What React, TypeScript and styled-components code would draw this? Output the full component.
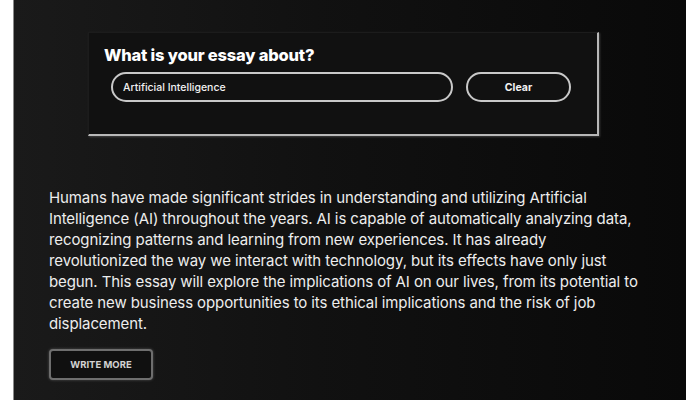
import { useState, type FC } from "react";
import styled, { createGlobalStyle } from "styled-components";

const GlobalStyle = createGlobalStyle`
  html, body {
    margin: 0;
    padding: 0;
    background: #ffffff;
  }
  * {
    box-sizing: border-box;
  }
`;

const ESSAY =
  "Humans have made significant strides in understanding and utilizing Artificial Intelligence (AI) throughout the years. AI is capable of automatically analyzing data, recognizing patterns and learning from new experiences. It has already revolutionized the way we interact with technology, but its effects have only just begun. This essay will explore the implications of AI on our lives, from its potential to create new business opportunities to its ethical implications and the risk of job displacement.";

const App: FC = () => {
  const [topic, setTopic] = useState("Artificial Intelligence");

  return (
    <>
      <GlobalStyle />
      <Page>
        <Panel>
          <TopicCard>
            <Heading>What is your essay about?</Heading>
            <TopicRow>
              <TopicInput value={topic} onChange={(e) => setTopic(e.target.value)} />
              <ClearButton onClick={() => setTopic("")}>Clear</ClearButton>
            </TopicRow>
          </TopicCard>

          {/* Generated essay */}
          <EssaySection>
            <EssayText>{ESSAY}</EssayText>
            <WriteMoreButton>Write more</WriteMoreButton>
          </EssaySection>
        </Panel>
      </Page>
    </>
  );
};

const Page = styled.div`
  width: 700px;
  height: 400px;
  padding: 0 14px 0 13px;
  background: #ffffff;
  overflow: hidden;
`;

const Panel = styled.main`
  height: 100%;
  border-left: 1px solid #8a8a8a;
  background: linear-gradient(to right, #1a1a1a 0%, #111111 45%, #090909 100%);
  padding-top: 32px;
  font-family: Inter, "Noto Sans", sans-serif;
  color: #ececec;
`;

const TopicCard = styled.section`
  width: 511px;
  height: 104px;
  margin-left: 74px;
  padding: 11px 0 0 15px;
  background: #111111;
  border-top: 1px solid #1c1c1c;
  border-left: 1px solid #1c1c1c;
  border-right: 2px solid #b8b8b8;
  border-bottom: 2px solid #b8b8b8;
  box-shadow: 1px 1px 2px rgba(255, 255, 255, 0.2);
`;

const Heading = styled.h2`
  margin: 0;
  font-size: 16.5px;
  line-height: 22px;
  font-weight: 800;
  letter-spacing: -0.2px;
  color: #ffffff;
`;

const TopicRow = styled.div`
  display: flex;
  align-items: center;
  gap: 13px;
  margin: 6px 0 0 7px;
`;

const pill = `
  height: 30px;
  border: 2px solid #c9c9c9;
  border-radius: 15px;
  background: transparent;
  color: #f2f2f2;
  font-family: Inter, "Noto Sans", sans-serif;
  outline: none;
`;

const TopicInput = styled.input`
  ${pill}
  width: 342px;
  padding: 0 10px;
  font-size: 10.5px;
  font-weight: 500;
`;

const ClearButton = styled.button`
  ${pill}
  width: 105px;
  font-size: 10.5px;
  font-weight: 700;
  cursor: pointer;
`;

const EssaySection = styled.section`
  margin-top: 51px;
  padding-left: 35px;
`;

const EssayText = styled.p`
  width: 590px;
  margin: 0;
  font-size: 15px;
  line-height: 21px;
  color: #ededed;
  letter-spacing: -0.1px;
`;

const WriteMoreButton = styled.button`
  display: block;
  width: 104px;
  height: 31px;
  margin-top: 15px;
  border: 2px solid #6e6e6e;
  border-radius: 4px;
  background: #101010;
  box-shadow: 0 0 3px rgba(255, 255, 255, 0.25);
  color: #d2d2d2;
  font-family: Inter, "Noto Sans", sans-serif;
  font-size: 9.5px;
  font-weight: 700;
  text-transform: uppercase;
  cursor: pointer;
`;

export default App;
